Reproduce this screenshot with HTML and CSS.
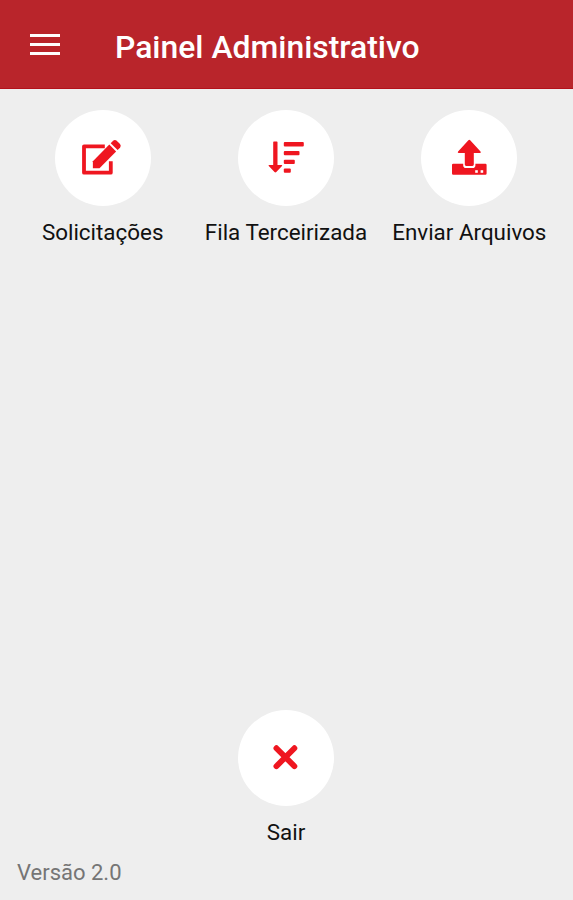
FILE: index.html
```
<!DOCTYPE html>
<html lang="pt-BR">

<head>
    <meta charset="UTF-8">
    <title>Painel Administrativo</title>
    <link rel="stylesheet" href="styles.css">
</head>

<body>
    <header>
        <button class="menu" aria-label="Menu">
            <span></span>
            <span></span>
            <span></span>
        </button>
        <h1>Painel Administrativo</h1>
    </header>

    <main>
        <nav class="actions">
            <a class="action">
                <span class="circle">
                    <svg viewBox="0.7 -0.3 50 50">
                        <path class="line" d="M27.5 13H6.7v26.4h26.8V28" />
                        <path d="M15.6 35v-7L32 11.3l6.8 6.8L22.2 35z" />
                        <path d="M33.4 9.9l2.4-2.4q1.8-1.5 3.6 0l3.3 3.3q1.5 1.8 0 3.6l-2.4 2.3z" />
                    </svg>
                </span>
                <span class="label">Solicitações</span>
            </a>
            <a class="action">
                <span class="circle">
                    <svg viewBox="0 0 50 50">
                        <path d="M12.2 9.2q0-.7.7-.7h2.9q.7 0 .7.7v22.9h4.1q1.2 0 .4 1l-5.7 6q-.9.7-1.8 0l-5.7-6q-.8-1 .4-1h4z" />
                        <rect x="22.8" y="9" width="20" height="4.4" rx="1" />
                        <rect x="22.8" y="17.9" width="15.7" height="4.4" rx="1" />
                        <rect x="22.8" y="26.7" width="11" height="4.4" rx="1" />
                        <rect x="22.8" y="35.4" width="7" height="4.4" rx="1" />
                    </svg>
                </span>
                <span class="label">Fila Terceirizada</span>
            </a>
            <a class="action">
                <span class="circle">
                    <svg viewBox="0 0 50 50">
                        <path d="M24.4 7.2q.9-.7 1.8 0l10.3 11.3q1 1.4-.5 1.4h-6.2v11.7q0 1.4-1.4 1.4h-6.2q-1.4 0-1.4-1.4V19.9h-6.2q-1.5 0-.5-1.4z" />
                        <path d="M8 32q0-1.2 1.2-1.2h10v1.4q0 2.8 2.8 2.8h6.6q2.8 0 2.8-2.8v-1.4h10q1.2 0 1.2 1.2v8.6q0 1.2-1.2 1.2H9.2Q8 41.8 8 40.6z" />
                        <rect class="led" x="31.2" y="37.2" width="2.6" height="2.6" />
                        <rect class="led" x="36.6" y="37.2" width="2.6" height="2.6" />
                    </svg>
                </span>
                <span class="label">Enviar Arquivos</span>
            </a>
        </nav>

        <a class="action">
            <span class="circle">
                <svg viewBox="0 0 50 50">
                    <path class="cross" d="M15.4 15.2l18 18M33.4 15.2l-18 18" />
                </svg>
            </span>
            <span class="label">Sair</span>
        </a>
    </main>

    <footer>Versão 2.0</footer>
</body>

</html>
```
FILE: styles.css
```
* {
    box-sizing: border-box;
}

body {
    margin: 0;
    height: 100vh;
    display: flex;
    flex-direction: column;
    background-color: #eee;
    color: #111;
    font-family: Roboto, "Liberation Sans", sans-serif;
}

header {
    display: flex;
    align-items: center;
    height: 89px;
    padding: 5px 30px 0;
    background-color: #b9252b;
    border-bottom: 1px solid #b3121b;
    color: #fff;
}

h1 {
    margin: 0 0 0 55px;
    font-size: 31.9px;
    font-weight: 500;
    line-height: 40px;
    white-space: nowrap;
}

.menu {
    display: flex;
    flex-direction: column;
    gap: 6px;
    width: 30px;
    margin: 0 0 5px;
    padding: 0;
    border: none;
    background: none;
}

.menu span {
    height: 3px;
    background-color: #fff;
}

main {
    flex: 1;
    display: flex;
    flex-direction: column;
    justify-content: space-between;
    padding: 21px 12px 0 11px;
}

.actions {
    display: grid;
    grid-template-columns: repeat(3, 1fr);
}

.action {
    display: flex;
    flex-direction: column;
    align-items: center;
}

.circle {
    display: flex;
    align-items: center;
    justify-content: center;
    width: 96px;
    height: 96px;
    border-radius: 50%;
    background-color: #fff;
}

svg {
    width: 50px;
    height: 50px;
    fill: #ef1620;
}

.line {
    fill: none;
    stroke: #ef1620;
    stroke-width: 3.8;
    stroke-linejoin: round;
}

.cross {
    stroke: #ef1620;
    stroke-width: 5.8;
    stroke-linecap: round;
}

.led {
    fill: #fff;
}

.label {
    margin-top: 12px;
    font-size: 22.4px;
    line-height: 28px;
    white-space: nowrap;
}

footer {
    padding: 13px 17px;
    color: #757575;
    font-size: 22px;
    line-height: 28px;
}
```
